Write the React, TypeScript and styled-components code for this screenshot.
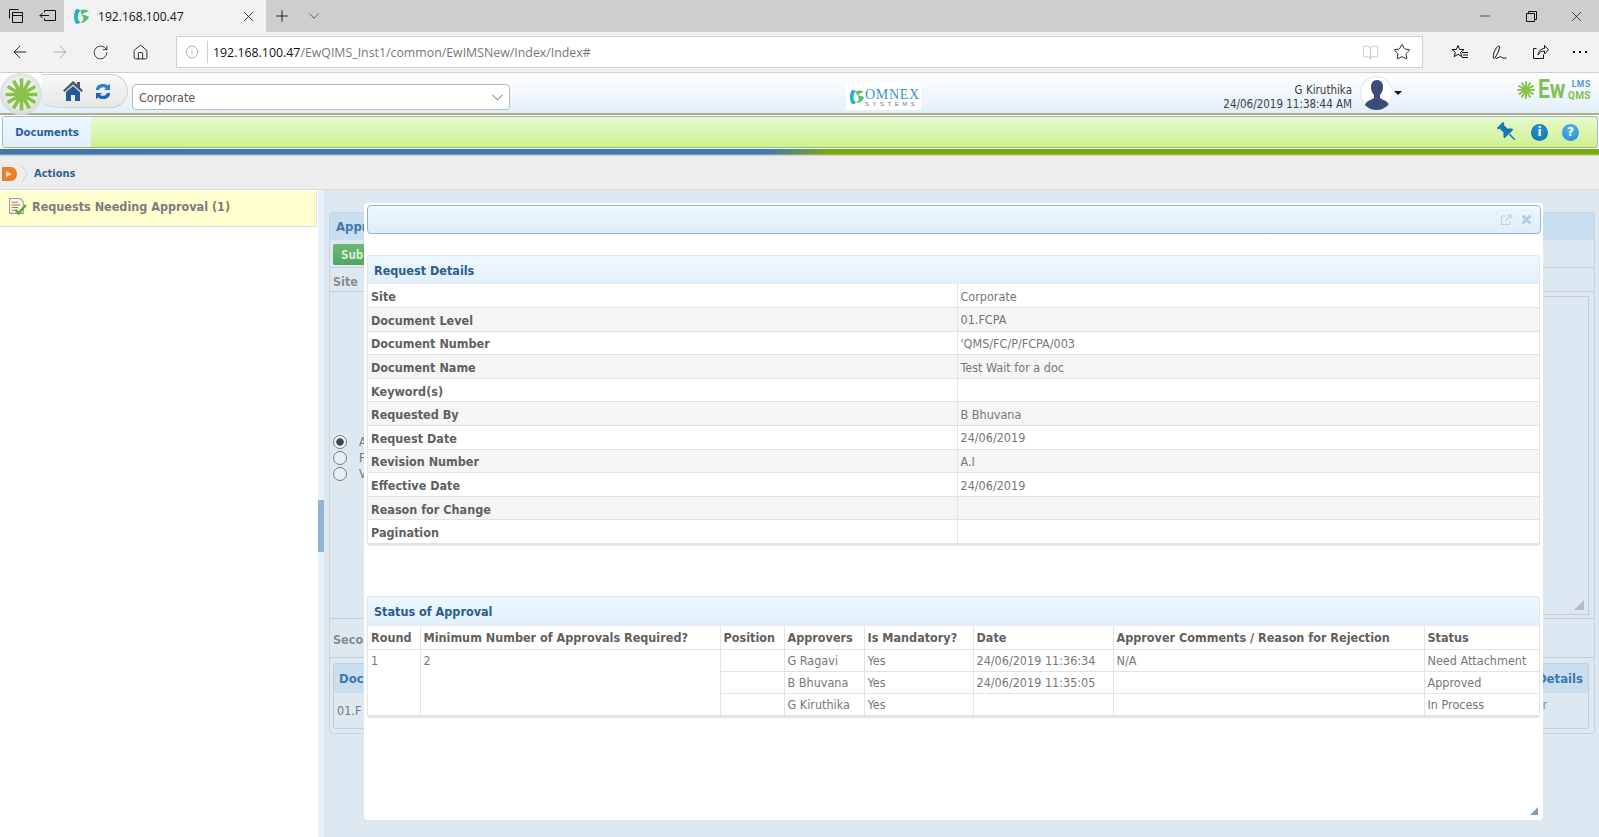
import styled, { createGlobalStyle } from "styled-components";
import { ArrowLeft, ArrowRight, BookOpen, ChevronDown, Home, Info, Minus, Plus, RotateCw, Star, X } from "lucide-react";

const UI_FONT = `"DejaVu Sans Condensed", "DejaVu Sans", sans-serif`;
const CHROME_FONT = `"Open Sans", "Noto Sans", sans-serif`;

const GlobalStyle = createGlobalStyle`
  html, body {
    margin: 0;
    height: 837px;
    overflow: hidden;
    background: #fff;
    font-family: ${UI_FONT};
  }
  * { box-sizing: border-box; }
`;

const Page = styled.div`
  position: relative;
  width: 1599px;
  height: 837px;
  display: flex;
  flex-direction: column;
  overflow: hidden;
`;

/* browser chrome */
const TabStrip = styled.div`
  height: 32px;
  flex: none;
  display: flex;
  align-items: center;
  background: #cdced0;
`;

const StripButton = styled.div<{ $w: number }>`
  width: ${(p) => p.$w}px;
  height: 32px;
  flex: none;
  display: flex;
  align-items: center;
  justify-content: center;
  color: #111;
`;

const ActiveTab = styled.div`
  width: 202px;
  height: 32px;
  flex: none;
  display: flex;
  align-items: center;
  padding: 0 9px 0 9px;
  background: #f2f2f2;
  font: 12.1px ${CHROME_FONT};
  color: #111;
`;

const TabTitle = styled.span`
  flex: 1;
  margin-left: 8px;
`;

const StripSpacer = styled.div`
  flex: 1;
`;

const BrowserBar = styled.div`
  height: 41px;
  flex: none;
  display: flex;
  align-items: flex-start;
  background: #f2f2f2;
  border-bottom: 1px solid #cfcfcf;
`;

const NavButton = styled.div<{ $off?: boolean }>`
  width: 40px;
  height: 40px;
  flex: none;
  display: flex;
  align-items: center;
  justify-content: center;
  color: ${(p) => (p.$off ? "#a9a9a9" : "#111")};
`;

const AddressBox = styled.div`
  width: 1247px;
  height: 32px;
  margin: 4px 17px 0 16px;
  display: flex;
  align-items: center;
  padding-right: 4px;
  background: #fff;
  border: 1px solid #d0d0d0;
  flex: none;
`;

const InfoSlot = styled.div`
  width: 31px;
  height: 22px;
  flex: none;
  display: flex;
  align-items: center;
  justify-content: center;
  border-right: 1px solid #d0d0d0;
  color: #8a8a8a;
`;

const Url = styled.div`
  flex: 1;
  margin-left: 5px;
  font: 12.35px ${CHROME_FONT};
  color: #777;
  b { font-weight: 400; color: #111; }
`;

const AddressIcon = styled.div<{ $dim?: boolean }>`
  width: 32px;
  display: flex;
  justify-content: center;
  color: ${(p) => (p.$dim ? "#b4b4b4" : "#111")};
`;

/* application header */
const AppHeader = styled.div`
  height: 42px;
  flex: none;
  display: flex;
  align-items: flex-start;
  background: linear-gradient(#ffffff, #e2effa);
  border-bottom: 2px solid #adb08f;
`;

const Sphere = styled.div`
  width: 42px;
  height: 42px;
  flex: none;
  border-radius: 50%;
  display: flex;
  align-items: center;
  justify-content: center;
  background: radial-gradient(circle at 50% 45%, #f4f7f2 35%, #d0d5d5 80%, #b4baba);
`;

const QuickPill = styled.div`
  width: 86px;
  height: 34px;
  flex: none;
  margin-top: 1px;
  display: flex;
  align-items: center;
  padding-left: 20px;
  gap: 11px;
  background: linear-gradient(#f7f7f7, #e6e8e8);
  border: 1px solid #cfcfcf;
  border-left: none;
  border-radius: 0 18px 18px 24px / 0 18px 18px 6px;
`;

const SiteSelect = styled.div`
  width: 378px;
  height: 26px;
  flex: none;
  margin: 11px 0 0 4px;
  display: flex;
  align-items: center;
  justify-content: space-between;
  padding: 0 2px 0 6px;
  background: #fff;
  border: 1px solid #b9b9b9;
  border-radius: 4px;
  font: 12.5px ${UI_FONT};
  color: #555;
`;

const OmnexLogo = styled.div`
  width: 75px;
  height: 26px;
  flex: none;
  margin: 11px 0 0 336px;
  display: flex;
  align-items: center;
  padding-left: 3px;
  gap: 0;
  background: #fff;
`;

const OmnexText = styled.div`
  display: flex;
  flex-direction: column;
  line-height: 1;
`;

const OmnexName = styled.span`
  font: 14px "Liberation Serif", serif;
  letter-spacing: 0.7px;
  color: #3b93cb;
`;

const OmnexSub = styled.span`
  margin-top: -2px;
  font: 6px "Liberation Sans", sans-serif;
  letter-spacing: 3.5px;
  color: #777;
`;

const UserBlock = styled.div`
  width: 431px;
  flex: none;
  margin-top: 10px;
  text-align: right;
  font: 11.5px/14px ${UI_FONT};
  color: #3f3f3f;
`;

const Avatar = styled.div`
  width: 33px;
  height: 34px;
  flex: none;
  margin: 3px 0 0 8px;
  border-radius: 50%;
  background: #fff;
  box-shadow: inset 0 0 2px #bbb;
  display: flex;
  align-items: flex-end;
  justify-content: center;
  overflow: hidden;
`;

const Caret = styled.div`
  width: 0;
  height: 0;
  flex: none;
  margin: 18px 0 0 1px;
  border-left: 4px solid transparent;
  border-right: 4px solid transparent;
  border-top: 4px solid #111;
`;

const EwLogo = styled.div`
  margin: 4px 0 0 115px;
  display: flex;
  align-items: center;
  flex: none;
`;

const EwWord = styled.span`
  width: 30px;
  flex: none;
  margin-left: 3px;
  font: 700 25px/1 "Roboto", sans-serif;
  transform: scaleX(0.85);
  transform-origin: left center;
  color: #7fbf55;
`;

const EwStack = styled.div`
  display: flex;
  flex-direction: column;
  font-family: "Roboto", sans-serif;
  font-weight: 700;
  line-height: 11px;
  text-align: right;
`;

const EwLms = styled.span`
  font-size: 8.5px;
  letter-spacing: 0.6px;
  color: #4c9ad0;
`;

const EwQms = styled.span`
  font-size: 10px;
  letter-spacing: 0.3px;
  color: #7fbf55;
`;

/* green menu bar */
const MenuBar = styled.div`
  height: 32px;
  flex: none;
  margin: 1px 1px 1px 2px;
  display: flex;
  align-items: stretch;
  background: linear-gradient(#e8f8cf, #cdf290);
  border: 1px solid #a3bcc0;
  border-bottom-color: #8fbf6a;
  border-radius: 3px;
`;

const MenuTab = styled.div`
  width: 88px;
  display: flex;
  align-items: center;
  justify-content: center;
  background: linear-gradient(#eef7ff, #e0eefa);
  font: 700 11.2px ${UI_FONT};
  color: #2a5f9e;
`;

const MenuIcons = styled.div`
  margin-left: auto;
  display: flex;
  align-items: center;
  gap: 14px;
  padding-right: 18px;
`;

const RoundIcon = styled.div<{ $bg: string }>`
  width: 17px;
  height: 17px;
  border-radius: 50%;
  display: flex;
  align-items: center;
  justify-content: center;
  background: ${(p) => p.$bg};
  font: 700 12px "DejaVu Sans", sans-serif;
  color: #fff;
`;

const Stripe = styled.div`
  height: 7px;
  flex: none;
  background: linear-gradient(transparent 70%, #ededed), linear-gradient(90deg, #3f76ac 0, #4679ae 48%, #7aa815 52%, #7aa815 100%);
`;

const Breadcrumb = styled.div`
  height: 34px;
  flex: none;
  display: flex;
  align-items: center;
  padding: 2px 0 0 2px;
  background: #ededed;
  border-bottom: 1px solid #d8d8d8;
`;

const CrumbLabel = styled.span`
  margin-left: 6px;
  font: 700 11px ${UI_FONT};
  color: #2f5f97;
`;

/* page body */
const Body = styled.div`
  flex: 1;
  display: flex;
  min-height: 0;
`;

const Sidebar = styled.div`
  width: 318px;
  flex: none;
  background: #fff;
`;

const SideItem = styled.div`
  width: 317px;
  height: 36px;
  margin-top: 1px;
  display: flex;
  align-items: center;
  padding: 0 0 5px 8px;
  gap: 5px;
  background: #ffffcf;
  border-right: 1px solid #e3e3e3;
  border-bottom: 1px solid #dcdcdc;
  font: 700 12.5px ${UI_FONT};
  color: #7c7c7c;
`;

const Splitter = styled.div`
  width: 6px;
  flex: none;
  background: #e6f2fb;
`;

const SplitHandle = styled.div`
  height: 52px;
  margin-top: 310px;
  background: #8fb4d6;
`;

const Content = styled.div`
  flex: 1;
  padding: 22px 4px 0 5px;
  background: #dee8f1;
`;

const BackPanel = styled.div`
  height: 522px;
  display: flex;
  flex-direction: column;
  border: 1px solid #c9d3dc;
  border-radius: 3px;
  font: 700 12.5px ${UI_FONT};
  color: #8c8c8c;
`;

const BackHeader = styled.div`
  height: 27px;
  flex: none;
  display: flex;
  align-items: center;
  padding-left: 6px;
  background: #c9dfef;
  font-size: 13px;
  color: #3f78ae;
`;

const BackToolbar = styled.div`
  height: 28px;
  flex: none;
  padding: 4px 3px;
  border-bottom: 1px solid #c5ced6;
`;

const SubmitButton = styled.div`
  width: 70px;
  height: 21px;
  display: flex;
  align-items: center;
  padding-left: 8px;
  background: linear-gradient(#6cb97a, #4fa561);
  border-radius: 2px;
  font-size: 11.5px;
  color: #d8efd0;
`;

const BackRow = styled.div<{ $h: number }>`
  height: ${(p) => p.$h}px;
  flex: none;
  display: flex;
  align-items: center;
  padding: 3px 0 0 3px;
  border-bottom: 1px solid #c5ced6;
`;

const EditorArea = styled.div`
  height: 327px;
  flex: none;
  display: flex;
  border-bottom: 1px solid #c5ced6;
`;

const RadioColumn = styled.div`
  width: 35px;
  flex: none;
  padding: 142px 0 0 3px;
`;

const RadioLine = styled.div`
  height: 16px;
  display: flex;
  align-items: center;
  gap: 12px;
  font: 12px ${UI_FONT};
  color: #777;
`;

const Radio = styled.span<{ $on?: boolean }>`
  width: 14px;
  height: 14px;
  flex: none;
  border-radius: 50%;
  border: 1px solid #7b7b7b;
  background: ${(p) => (p.$on ? "radial-gradient(circle, #3a4450 0 3.4px, #f0f3f6 4px)" : "#e9eff4")};
`;

const EditorBox = styled.div`
  position: relative;
  flex: 1;
  margin: 4px 5px 3px 0;
  border: 1px solid #c5ced6;
`;

const BackGrip = styled.div`
  position: absolute;
  right: 4px;
  bottom: 4px;
  width: 0;
  height: 0;
  border-left: 10px solid transparent;
  border-bottom: 10px solid #b3bcc4;
`;

const InnerPanel = styled.div`
  height: 66px;
  flex: none;
  margin: 5px 5px 0 3px;
  border: 1px solid #c5ced6;
  border-radius: 3px;
`;

const InnerHead = styled.div`
  height: 29px;
  display: flex;
  align-items: center;
  justify-content: space-between;
  padding: 0 5px;
  background: #c9dfef;
  font-size: 13px;
  color: #3f78ae;
`;

const InnerCells = styled.div`
  display: flex;
  justify-content: space-between;
  padding: 0 41px 0 3px;
  font: 12.5px ${UI_FONT};
`;

const InnerCell = styled.span<{ $top: number; $color: string }>`
  margin-top: ${(p) => p.$top}px;
  color: ${(p) => p.$color};
`;

/* dialog */
const Dialog = styled.div`
  position: absolute;
  left: 364px;
  top: 203px;
  width: 1179px;
  height: 617px;
  padding: 2px 2px 0 3px;
  background: #fff;
  border-radius: 4px;
`;

const DialogBar = styled.div`
  height: 29px;
  display: flex;
  align-items: center;
  justify-content: flex-end;
  gap: 2px;
  padding-right: 6px;
  background: linear-gradient(#eff8ff, #dfedf9);
  border: 1px solid #8fb4d3;
  border-radius: 4px;
`;

const BarButton = styled.div<{ $w: number }>`
  width: ${(p) => p.$w}px;
  height: 20px;
  display: flex;
  align-items: center;
  justify-content: center;
  border: 1px solid #e2eef7;
  border-radius: 4px;
`;

const Section = styled.div<{ $top: number }>`
  margin: ${(p) => p.$top}px 1px 0 0;
  border: 1px solid #e4e4e4;
  border-bottom-width: 2px;
  border-radius: 3px;
  overflow: hidden;
`;

const SectionTitle = styled.div<{ $h: number }>`
  height: ${(p) => p.$h}px;
  display: flex;
  align-items: center;
  padding-left: 6px;
  padding-bottom: ${(p) => p.$h - 28}px;
  background: linear-gradient(#eef7ff, #e2effa);
  font: 700 12.5px ${UI_FONT};
  color: #2a5d8f;
`;

const DataTable = styled.table`
  width: 100%;
  border-collapse: collapse;
  table-layout: fixed;
`;

const LabelCell = styled.td`
  width: 589px;
  height: 23.6px;
  padding: 2px 0 0 3px;
  border-right: 1px solid #e4e4e4;
  border-bottom: 1px solid #e2e2e2;
  font: 700 12.5px ${UI_FONT};
  color: #5f5f5f;
`;

const ValueCell = styled.td`
  padding: 1px 0 0 3px;
  border-bottom: 1px solid #e2e2e2;
  font: 12.5px ${UI_FONT};
  color: #777;
`;

const DetailRow = styled.tr<{ $alt: boolean }>`
  background: ${(p) => (p.$alt ? "#f5f5f5" : "#fff")};
`;

const HeadCell = styled.th<{ $w: number }>`
  width: ${(p) => p.$w}px;
  height: 23.5px;
  padding: 0 0 0 3px;
  text-align: left;
  border-right: 1px solid #e4e4e4;
  border-bottom: 1px solid #e2e2e2;
  font: 700 12.5px ${UI_FONT};
  color: #5f5f5f;
  white-space: nowrap;
  &:last-child { border-right: none; }
`;

const StatusCell = styled.td`
  height: 22px;
  padding: 0 0 0 3px;
  vertical-align: middle;
  border-right: 1px solid #e4e4e4;
  border-bottom: 1px solid #e2e2e2;
  font: 12.5px ${UI_FONT};
  color: #777;
  white-space: nowrap;
  &:last-child { border-right: none; }
`;

const SpanCell = styled(StatusCell)`
  padding-top: 3px;
  vertical-align: top;
`;

const ResizeGrip = styled.div`
  position: absolute;
  right: 5px;
  bottom: 5px;
  width: 0;
  height: 0;
  border-left: 8px solid transparent;
  border-bottom: 8px solid #7f9db8;
`;

const details: [string, string][] = [
  ["Site", "Corporate"],
  ["Document Level", "01.FCPA"],
  ["Document Number", "'QMS/FC/P/FCPA/003"],
  ["Document Name", "Test Wait for a doc"],
  ["Keyword(s)", ""],
  ["Requested By", "B Bhuvana"],
  ["Request Date", "24/06/2019"],
  ["Revision Number", "A.I"],
  ["Effective Date", "24/06/2019"],
  ["Reason for Change", ""],
  ["Pagination", ""],
];

const statusColumns: [string, number][] = [
  ["Round", 52],
  ["Minimum Number of Approvals Required?", 300],
  ["Position", 64],
  ["Approvers", 80],
  ["Is Mandatory?", 109],
  ["Date", 140],
  ["Approver Comments / Reason for Rejection", 311],
  ["Status", 116],
];

const approvers = [
  ["G Ragavi", "Yes", "24/06/2019 11:36:34", "N/A", "Need Attachment"],
  ["B Bhuvana", "Yes", "24/06/2019 11:35:05", "", "Approved"],
  ["G Kiruthika", "Yes", "", "", "In Process"],
];

function OmnexMark({ size }: { size: number }) {
  return (
    <svg width={size} height={size} viewBox="0 0 16 16">
      <path d="M3 1c2 0 3 .5 4 1.500C5 4 4.500 6 4.500 8s.5 4 2.500 5.500C6 14.500 5 15 3 15c-1.500-2-2-4.500-2-7s.5-5 2-7z" fill="#1fb5c4" />
      <path d="M7 2c3-1 6-.5 8 1-2 .5-5 1.500-6.500 3.500 2.500 0 5 .5 6.500 2-1 3-4 5.500-8 5.500 2-1.500 3.500-3.500 2.500-5.500C8.500 6.500 7 5 7 2z" fill="#63bb6c" />
    </svg>
  );
}

function Sunburst({ size, line }: { size: number; line: number }) {
  const spokes = [0, 30, 60, 90, 120, 150];
  return (
    <svg width={size} height={size} viewBox="0 0 32 32">
      {spokes.map((a) => (
        <line key={a} x1="16" y1="0.500" x2="16" y2="31.500" stroke="#88c24a" strokeWidth={line} transform={`rotate(${a} 16 16)`} />
      ))}
      <circle cx="16" cy="16" r="5" fill="#88c24a" />
    </svg>
  );
}

function App() {
  return (
    <Page>
      <GlobalStyle />
      <TabStrip>
        <StripButton $w={32}>
          <svg width="16" height="16" viewBox="0 0 16 16" fill="none" stroke="#111">
            <path d="M1.500 10.500v-9h9M4.500 4.500h10v10h-10zM4.500 7.500h10" />
          </svg>
        </StripButton>
        <StripButton $w={32}>
          <svg width="18" height="14" viewBox="0 0 18 14" fill="none" stroke="#111">
            <path d="M5.500 3.500v-2h11v10h-11v-2M1 6.500h9M3.500 4l-2.500 2.500 2.500 2.500" />
          </svg>
        </StripButton>
        <ActiveTab>
          <OmnexMark size={17} />
          <TabTitle>192.168.100.47</TabTitle>
          <X size={17} strokeWidth={1.1} />
        </ActiveTab>
        <StripButton $w={32}>
          <Plus size={18} strokeWidth={1.2} />
        </StripButton>
        <StripButton $w={32}>
          <ChevronDown size={18} strokeWidth={1} color="#333" />
        </StripButton>
        <StripSpacer />
        <StripButton $w={46}>
          <Minus size={16} strokeWidth={1} />
        </StripButton>
        <StripButton $w={46}>
          <svg width="11" height="11" viewBox="0 0 11 11" fill="none" stroke="#111">
            <path d="M.5 2.500h8v8h-8zM2.500 2.500v-2h8v8h-2" />
          </svg>
        </StripButton>
        <StripButton $w={45}>
          <X size={17} strokeWidth={1} />
        </StripButton>
      </TabStrip>

      <BrowserBar>
        <NavButton><ArrowLeft size={20} strokeWidth={1.1} /></NavButton>
        <NavButton $off><ArrowRight size={20} strokeWidth={1.1} /></NavButton>
        <NavButton><RotateCw size={17} strokeWidth={1.1} /></NavButton>
        <NavButton><Home size={17} strokeWidth={1.2} /></NavButton>
        <AddressBox>
          <InfoSlot><Info size={14} strokeWidth={1.1} /></InfoSlot>
          <Url><b>192.168.100.47</b>/EwQIMS_Inst1/common/EwIMSNew/Index/Index#</Url>
          <AddressIcon $dim><BookOpen size={17} strokeWidth={1} /></AddressIcon>
          <AddressIcon><Star size={18} strokeWidth={1.2} /></AddressIcon>
        </AddressBox>
        <NavButton>
          <svg width="18" height="16" viewBox="0 0 18 16" fill="none" stroke="#111">
            <path d="M7 1.500l1.700 4h4.300l-3.400 2.800 1.200 4.400L7 10.300 3.200 12.700l1.200-4.400L1 5.500h4.300zM11 8.500h6M12 11h5M11 13.500h6" />
          </svg>
        </NavButton>
        <NavButton>
          <svg width="16" height="16" viewBox="0 0 16 16" fill="none" stroke="#111">
            <path d="M1.500 14.500c-.8-3 1-9 4-12 .8-.8 2-.8 2 .5 0 3-2.500 8-5 11.500M3.500 13.500l1 1 4-2c1.500 2 4 1.500 6 1.500" />
          </svg>
        </NavButton>
        <NavButton>
          <svg width="17" height="16" viewBox="0 0 17 16" fill="none" stroke="#111">
            <path d="M4.500 4.500h-3v10h10v-4M6 11c.5-4 3-6.500 6.500-6.500V1.500l4 4.300-4 4.200v-3c-3 0-5 1.200-6.500 4z" />
          </svg>
        </NavButton>
        <NavButton>
          <svg width="16" height="4" viewBox="0 0 16 4" fill="#111">
            <rect x="1" y="1" width="2" height="2" />
            <rect x="7" y="1" width="2" height="2" />
            <rect x="13" y="1" width="2" height="2" />
          </svg>
        </NavButton>
      </BrowserBar>

      <AppHeader>
        <Sphere><Sunburst size={33} line={3.6} /></Sphere>
        <QuickPill>
          <svg width="22" height="22" viewBox="0 0 22 22">
            <path d="M11 1L1 10.500l1.500 1.500L11 4.500l8.500 7.500 1.500-1.500-3-3V2h-3v2.500z" fill="#4a5a68" />
            <path d="M4 12l7-6 7 6v9h-5v-6H9v6H4z" fill="#1f5c99" />
          </svg>
          <svg width="16" height="17" viewBox="0 0 16 17">
            <path d="M1 7c0-4 3-6 7-6 2 0 3.500.5 4.500 1.500L15 1v6H9l2-2c-2-1.500-6-1-7 2z" fill="#2f7fd0" />
            <path d="M15 10c0 4-3 6-7 6-2 0-3.500-.5-4.500-1.500L1 16v-6h6l-2 2c2 1.500 6 1 7-2z" fill="#1e66b5" />
          </svg>
        </QuickPill>
        <SiteSelect>
          Corporate
          <ChevronDown size={19} strokeWidth={1} color="#333" />
        </SiteSelect>
        <OmnexLogo>
          <OmnexMark size={16} />
          <OmnexText>
            <OmnexName>OMNEX</OmnexName>
            <OmnexSub>SYSTEMS</OmnexSub>
          </OmnexText>
        </OmnexLogo>
        <UserBlock>
          G Kiruthika
          <br />
          24/06/2019 11:38:44 AM
        </UserBlock>
        <Avatar>
          <svg width="26" height="31" viewBox="0 0 26 31">
            <path d="M13 1c4 0 6 3 6 7 0 3-1 6-3 8v3c3 2 8 3 9 7 .5 2 0 5 0 5H1s-.5-3 0-5c1-4 6-5 9-7v-3c-2-2-3-5-3-8 0-4 2-7 6-7z" fill="#3a4c78" />
          </svg>
        </Avatar>
        <Caret />
        <EwLogo>
          <Sunburst size={18} line={3.4} />
          <EwWord>Ew</EwWord>
          <EwStack>
            <EwLms>LMS</EwLms>
            <EwQms>QMS</EwQms>
          </EwStack>
        </EwLogo>
      </AppHeader>

      <MenuBar>
        <MenuTab>Documents</MenuTab>
        <MenuIcons>
          <svg width="20" height="20" viewBox="0 0 18 18">
            <g transform="rotate(-45 9 9)">
              <path d="M5 0h8v1.500l-1.500 1v4.500l3 3v1.500H3.500v-1.500l3-3V2.500L5 1.500z" fill="#1678b8" />
              <path d="M9 12v7" stroke="#1678b8" strokeWidth="1.300" />
            </g>
          </svg>
          <RoundIcon $bg="radial-gradient(circle at 50% 30%, #2a93cc, #0e6ea8)">i</RoundIcon>
          <RoundIcon $bg="radial-gradient(circle at 50% 30%, #5bb4ec, #1f86d0)">?</RoundIcon>
        </MenuIcons>
      </MenuBar>
      <Stripe />
      <Breadcrumb>
        <svg width="26" height="18" viewBox="0 0 26 18">
          <path d="M0 2h9c3 0 6 3 6 7s-3 7-6 7H0z" fill="#e87f2e" />
          <path d="M4 6l6 3-6 3z" fill="#fbd9b8" />
          <path d="M20 1l5 8-5 8" fill="none" stroke="#d5d5d5" />
        </svg>
        <CrumbLabel>Actions</CrumbLabel>
      </Breadcrumb>

      <Body>
        <Sidebar>
          <SideItem>
            <svg width="19" height="19" viewBox="0 0 18 18">
              <path d="M1.500 1.500h10l3 3v11h-13z" fill="#f6f4ea" stroke="#9a9a9a" />
              <path d="M3.500 5h6M3.500 7.500h8M3.500 10h6M3.500 12.500h4" stroke="#c2793a" />
              <path d="M7 12l3 3.500 7-8" fill="none" stroke="#5aa82c" strokeWidth="2.200" />
            </svg>
            Requests Needing Approval (1)
          </SideItem>
        </Sidebar>
        <Splitter><SplitHandle /></Splitter>
        <Content>
          <BackPanel>
            <BackHeader>Appr</BackHeader>
            <BackToolbar><SubmitButton>Sub</SubmitButton></BackToolbar>
            <BackRow $h={24}>Site</BackRow>
            <EditorArea>
              <RadioColumn>
                <RadioLine><Radio $on />A</RadioLine>
                <RadioLine><Radio />F</RadioLine>
                <RadioLine><Radio />V</RadioLine>
              </RadioColumn>
              <EditorBox><BackGrip /></EditorBox>
            </EditorArea>
            <BackRow $h={39}>Seco</BackRow>
            <InnerPanel>
              <InnerHead><span>Doc</span><span>Details</span></InnerHead>
              <InnerCells>
                <InnerCell $top={10} $color="#777">01.F</InnerCell>
                <InnerCell $top={4} $color="#5a9fd0">r</InnerCell>
              </InnerCells>
            </InnerPanel>
          </BackPanel>
        </Content>
      </Body>

      <Dialog>
        <DialogBar>
          <BarButton $w={20}>
            <svg width="12" height="12" viewBox="0 0 12 12" fill="none" stroke="#b9d4ea" strokeWidth="1.200">
              <path d="M5 2H1.500v8.500H10V7M7 1h4v4M11 1L5.500 6.500" />
            </svg>
          </BarButton>
          <BarButton $w={16}>
            <svg width="11" height="11" viewBox="0 0 11 11" fill="none" stroke="#aecde6" strokeWidth="3">
              <path d="M1.500 1.500l8 8M9.500 1.500l-8 8" />
            </svg>
          </BarButton>
        </DialogBar>

        <Section $top={21}>
          <SectionTitle $h={28}>Request Details</SectionTitle>
          <DataTable>
            <tbody>
              {details.map(([label, value], i) => (
                <DetailRow key={label} $alt={i % 2 === 1}>
                  <LabelCell>{label}</LabelCell>
                  <ValueCell>{value}</ValueCell>
                </DetailRow>
              ))}
            </tbody>
          </DataTable>
        </Section>

        <Section $top={50}>
          <SectionTitle $h={29}>Status of Approval</SectionTitle>
          <DataTable>
            <thead>
              <tr>
                {statusColumns.map(([name, w]) => (
                  <HeadCell key={name} $w={w}>{name}</HeadCell>
                ))}
              </tr>
            </thead>
            <tbody>
              {approvers.map((row, i) => (
                <tr key={row[0]}>
                  {i === 0 && <SpanCell rowSpan={3}>1</SpanCell>}
                  {i === 0 && <SpanCell rowSpan={3}>2</SpanCell>}
                  <StatusCell />
                  <StatusCell>{row[0]}</StatusCell>
                  <StatusCell>{row[1]}</StatusCell>
                  <StatusCell>{row[2]}</StatusCell>
                  <StatusCell>{row[3]}</StatusCell>
                  <StatusCell>{row[4]}</StatusCell>
                </tr>
              ))}
            </tbody>
          </DataTable>
        </Section>
        <ResizeGrip />
      </Dialog>
    </Page>
  );
}

export default App;
